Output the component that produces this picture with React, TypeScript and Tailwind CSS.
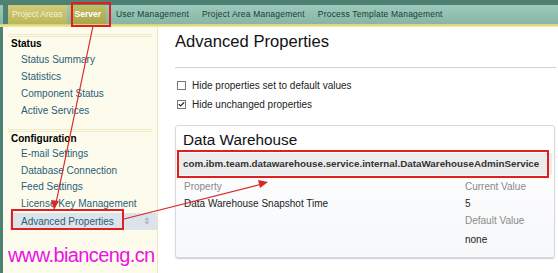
import { Check } from 'lucide-react'

const tabs = ['User Management', 'Project Area Management', 'Process Template Management']

const statusLinks = ['Status Summary', 'Statistics', 'Component Status', 'Active Services']
const configLinks = ['E-mail Settings', 'Database Connection', 'Feed Settings', 'License Key Management']

function Divider() {
  return <div className="mx-[5px] h-[3px] border-t border-b border-[#eee9c6]" />
}

export default function App() {
  return (
    <div className="relative w-[558px] h-[273px] overflow-hidden bg-white font-['Liberation_Sans',Arial,sans-serif] text-[10px]">
      {/* top tab bar */}
      <div className="h-[5px] bg-[#4f8074]" />
      <div className="flex h-[19px] items-stretch bg-gradient-to-b from-[#9ccabb] to-[#86b6a6] pl-[3px] text-[8.5px]">
        <div className="w-[5px] bg-[#4f8074]" />
        <div className="flex items-center bg-gradient-to-b from-[#d2cc7a] to-[#bcb65a] pl-[4px] pr-[4px] text-[#f4f2d8]">Project Areas</div>
        <div className="ml-[3px] flex items-center bg-gradient-to-b from-[#c4be66] to-[#a9a64a] px-[5px] font-bold text-white">Server</div>
        <div className="flex items-center gap-[13px] pl-[10px] text-[#1e3a34]">
          {tabs.map((t) => (
            <span key={t} className="tracking-[0.2px]">{t}</span>
          ))}
        </div>
      </div>
      <div className="h-[3px] bg-gradient-to-b from-[#d8cf62] to-[#efe9b0]" />

      <div className="flex h-[246px]">
        <div className="w-[3px] bg-[#4f8074]" />
        {/* sidebar */}
        <div className="w-[155px] border-r border-[#ece6c0] bg-[#fdfcec] pt-[7px]">
          <Divider />
          <div className="pl-[8px] font-bold text-black leading-[14px]">Status</div>
          <div className="pl-[18px] text-[#2b5d78] leading-[17px]">
            {statusLinks.map((l) => (
              <div key={l}>{l}</div>
            ))}
          </div>
          <div className="h-[10px]" />
          <Divider />
          <div className="pl-[8px] font-bold text-black leading-[14px]">Configuration</div>
          <div className="pl-[18px] text-[#2b5d78] leading-[16.7px]">
            {configLinks.map((l) => (
              <div key={l}>{l}</div>
            ))}
          </div>
          <div className="ml-[7px] flex h-[17px] items-center justify-between bg-[#dde3ea] pl-[11px] pr-[6px] text-[#2b5d78]">
            <span>Advanced Properties</span>
            <span className="text-[9px] text-[#9aa4ae]">⇕</span>
          </div>
          <div className="pl-[5px] pt-[13px] text-[20px] leading-[24px] tracking-[-0.6px] text-[#ee10e8]">
            www.bianceng.cn
          </div>
        </div>

        {/* main */}
        <div className="flex-1 pl-[17px] pr-[2px] pt-[3px]">
          <div className="text-[16.6px] leading-[24px] text-[#111]">Advanced Properties</div>
          <div className="mt-[13px] h-[1px] bg-[#d4d4d4]" />
          <div className="mt-[11px] flex flex-col gap-[6px] pl-[2px] text-[#222] leading-[13px]">
            <label className="flex items-center gap-[6px]">
              <span className="h-[9px] w-[9px] border border-[#777] bg-white" />
              Hide properties set to default values
            </label>
            <label className="flex items-center gap-[6px]">
              <span className="flex h-[9px] w-[9px] items-center justify-center border border-[#777] bg-white">
                <Check className="h-[9px] w-[9px] text-[#222]" strokeWidth={4} />
              </span>
              Hide unchanged properties
            </label>
          </div>

          {/* card */}
          <div className="mt-[14px] mr-[1px] h-[133px] rounded-[3px] border border-[#d6dadd] bg-gradient-to-b from-white to-[#f7f8fa] shadow-[0_1px_1px_#ccd]">
            <div className="pl-[7px] pt-[4px] text-[15.3px] leading-[20px] text-[#111]">Data Warehouse</div>
            <div className="mx-[2px] mt-[3px] flex h-[22px] items-center bg-[#ececec] pl-[5px] text-[9.8px] font-bold text-[#333]">
              com.ibm.team.datawarehouse.service.internal.DataWarehouseAdminService
            </div>
            <div className="grid grid-cols-[281px_1fr] pl-[8px] pt-[3px] leading-[17px]">
              <div className="text-[#8a8a8a]">Property</div>
              <div className="text-[#8a8a8a]">Current Value</div>
              <div className="text-[#222]">Data Warehouse Snapshot Time</div>
              <div className="text-[#222]">5</div>
              <div />
              <div className="text-[#8a8a8a]">Default Value</div>
              <div />
              <div className="text-[#222] pt-[2px]">none</div>
            </div>
          </div>
        </div>
      </div>

      {/* annotation overlay */}
      <svg className="pointer-events-none absolute inset-0" width="558" height="273" viewBox="0 0 558 273">
        <rect x="72" y="3" width="38" height="23" fill="none" stroke="#e02020" strokeWidth="2" />
        <rect x="12" y="210" width="111" height="19" fill="none" stroke="#e02020" strokeWidth="2" />
        <rect x="178" y="151" width="370" height="26" fill="none" stroke="#e02020" strokeWidth="2" />
        <line x1="93" y1="26" x2="56" y2="203" stroke="#d42a2a" strokeWidth="1.2" />
        <polygon points="54,210 51,200 59,201" fill="#d42a2a" />
        <line x1="124" y1="219" x2="262" y2="184" stroke="#d42a2a" strokeWidth="1.2" />
        <polygon points="268,182 258,180 260,188" fill="#d42a2a" />
      </svg>
    </div>
  )
}
